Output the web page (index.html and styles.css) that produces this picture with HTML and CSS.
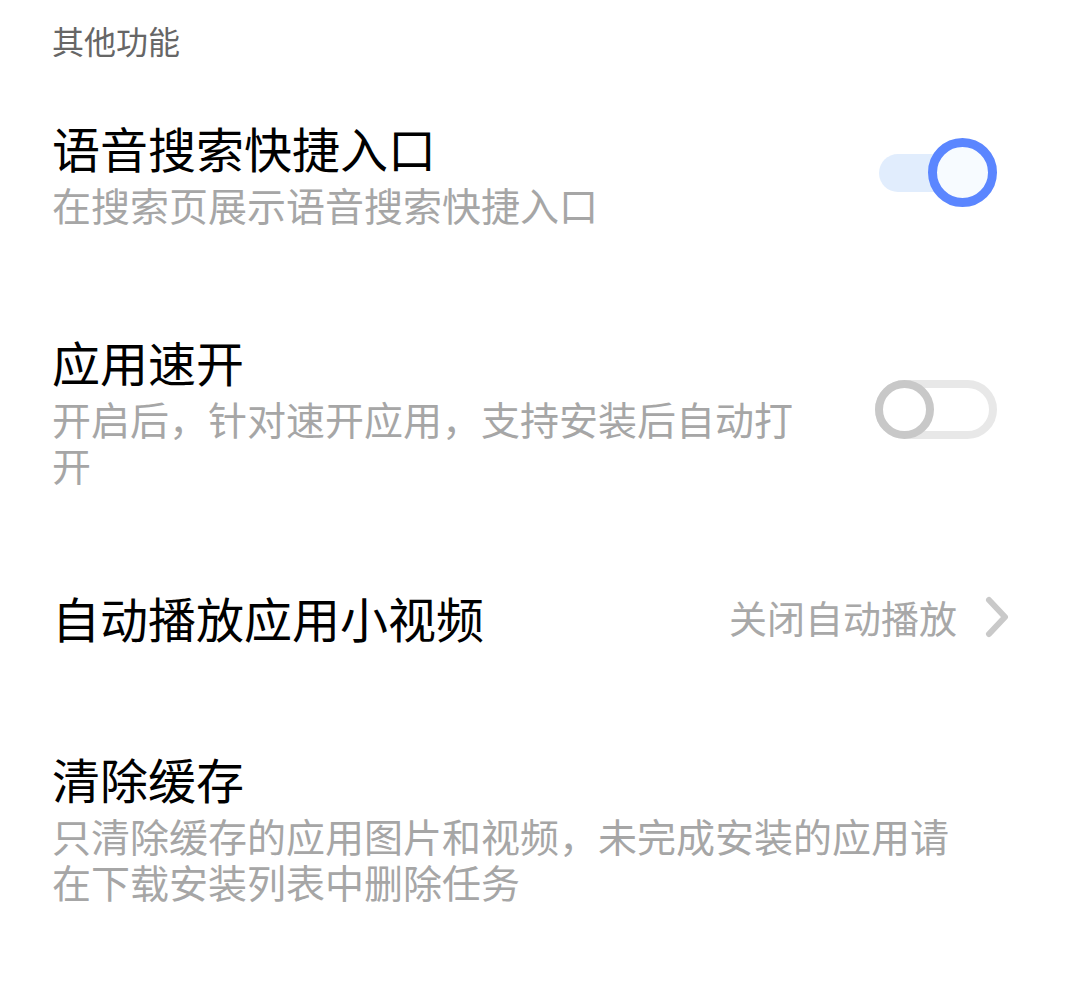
FILE: index.html
```html
<!DOCTYPE html>
<html lang="zh-CN">
  <head>
    <meta charset="UTF-8" />
    <meta name="viewport" content="width=device-width, initial-scale=1.0" />
    <title>其他功能</title>
    <link rel="stylesheet" href="styles.css">
  </head>
  <body>
    <div class="section-title">其他功能</div>

    <div class="list">
      <div class="row">
        <div class="text">
          <div class="title">语音搜索快捷入口</div>
          <div class="desc">在搜索页展示语音搜索快捷入口</div>
        </div>
        <div class="switch on">
          <span class="track"></span>
          <span class="knob"></span>
        </div>
      </div>

      <div class="row">
        <div class="text">
          <div class="title">应用速开</div>
          <div class="desc">开启后，针对速开应用，支持安装后自动打开</div>
        </div>
        <div class="switch off">
          <span class="track"></span>
          <span class="knob"></span>
        </div>
      </div>

      <div class="row row-link">
        <div class="text">
          <div class="title">自动播放应用小视频</div>
        </div>
        <div class="value">关闭自动播放</div>
        <svg class="chevron" width="26" height="42" viewBox="0 0 26 42">
          <path d="M4 4 L20 21 L4 38" fill="none" stroke="#c9c9c9" stroke-width="6" stroke-linecap="round" stroke-linejoin="round" />
        </svg>
      </div>

      <div class="row">
        <div class="text">
          <div class="title">清除缓存</div>
          <div class="desc wide">只清除缓存的应用图片和视频，未完成安装的应用请在下载安装列表中删除任务</div>
        </div>
      </div>
    </div>
  </body>
</html>
```

FILE: styles.css
```css
body {
  font-family: "Noto Sans CJK SC", "Noto Sans", sans-serif;
  margin: 0;
  padding: 18px 60px 0 52px;
  background-color: #fff;
  color: #000;
}
.section-title {
  font-size: 32px;
  line-height: 44px;
  color: #666;
  margin-bottom: 4px;
}
.row {
  display: flex;
  align-items: center;
  gap: 60px;
  padding: 53px 0;
}
.row-link {
  padding: 49px 0 52px;
  gap: 0;
}
.text {
  flex: 1;
  min-width: 0;
}
.title {
  font-size: 48px;
  line-height: 56px;
}
.desc {
  font-size: 39px;
  line-height: 46px;
  color: #a6a6a6;
  margin-top: 6px;
}
.desc.wide {
  max-width: 910px;
}
.value {
  font-size: 38px;
  line-height: 56px;
  color: #a8a8a8;
  margin-right: 28px;
}
.chevron {
  display: block;
  margin-right: -1px;
}
.switch {
  position: relative;
  width: 122px;
  height: 70px;
  margin-right: 13px;
  flex-shrink: 0;
}
.switch .track {
  position: absolute;
  box-sizing: border-box;
  border-radius: 40px;
}
.switch .knob {
  position: absolute;
  box-sizing: border-box;
  border-radius: 50%;
}
.switch.on .track {
  left: 4px;
  top: 16px;
  width: 112px;
  height: 38px;
  background-color: #e1edfd;
}
.switch.on .knob {
  right: 0;
  top: 0;
  width: 69px;
  height: 69px;
  border: 9px solid #5b86ff;
  background-color: #f7fbff;
}
.switch.off .track {
  left: 0;
  top: 5px;
  width: 122px;
  height: 59px;
  border: 8px solid #e8e8e8;
  background-color: #fff;
}
.switch.off .knob {
  left: 0;
  top: 5px;
  width: 59px;
  height: 59px;
  border: 8px solid #c8c8c8;
  background-color: #fff;
}
```
